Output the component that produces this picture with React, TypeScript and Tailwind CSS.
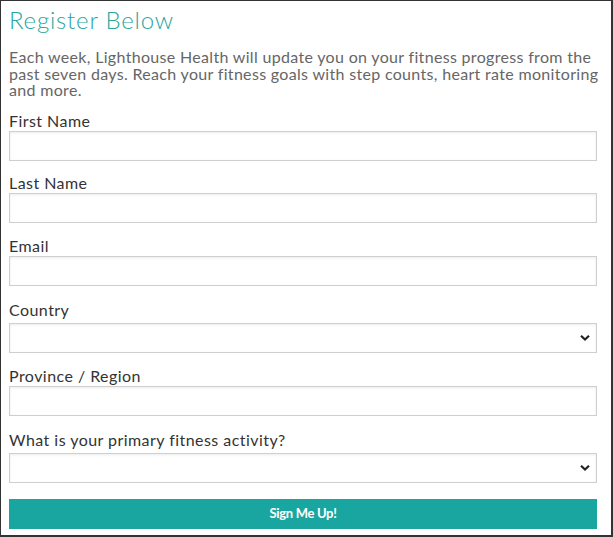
import React from "react";

const Chevron = () => (
  <svg
    className="pointer-events-none absolute right-[7px] top-1/2 -translate-y-1/2"
    width="10"
    height="7"
    viewBox="0 0 10 7"
  >
    <path d="M1 1.2 L5 5 L9 1.2" fill="none" stroke="#222" strokeWidth="2.2" />
  </svg>
);

const inputCls =
  "block w-full h-[30px] border border-[#cfcfcf] bg-white shadow-[inset_0_1px_3px_rgba(0,0,0,0.08)] outline-none px-2 text-[16px]";

function Field({ label, select, mb }: { label: string; select?: boolean; mb: string }) {
  return (
    <div className={mb}>
      <label
        className={
          "block text-[16px] leading-[18px] text-[#333] tracking-[0.45px] " +
          (select ? "mb-[4px]" : "mb-[1px]")
        }
      >
        {label}
      </label>
      {select ? (
        <div className="relative">
          <select className={inputCls + " appearance-none"} defaultValue="">
            <option value=""></option>
          </select>
          <Chevron />
        </div>
      ) : (
        <input type="text" className={inputCls} />
      )}
    </div>
  );
}

export default function App() {
  return (
    <div
      className="w-[613px] h-[537px] bg-white border-t border-l border-r-2 border-b-2 border-[#333] box-border pl-[8px] pr-[14px] pt-[4px]"
      style={{ fontFamily: "Lato, 'Open Sans', sans-serif" }}
    >
      <h1 className="text-[24px] leading-[30px] text-[#27a69f] font-light tracking-[0.8px]">
        Register Below
      </h1>
      <p className="mt-[14px] text-[16px] leading-[16.5px] text-[#666] tracking-[0.32px] whitespace-nowrap">
        Each week, Lighthouse Health will update you on your fitness progress from the
        <br />
        past seven days. Reach your fitness goals with step counts, heart rate monitoring
        <br />
        and more.
      </p>
      <div className="mt-[13px]">
        <Field label="First Name" mb="mb-[13px]" />
        <Field label="Last Name" mb="mb-[14px]" />
        <Field label="Email" mb="mb-[15px]" />
        <Field label="Country" select mb="mb-[14px]" />
        <Field label="Province / Region" mb="mb-[15px]" />
        <Field label="What is your primary fitness activity?" select mb="mb-[16px]" />
      </div>
      <button className="block w-full h-[30px] bg-[#1aa6a0] text-white text-[13px] font-bold tracking-[-0.3px]">
        Sign Me Up!
      </button>
    </div>
  );
}
